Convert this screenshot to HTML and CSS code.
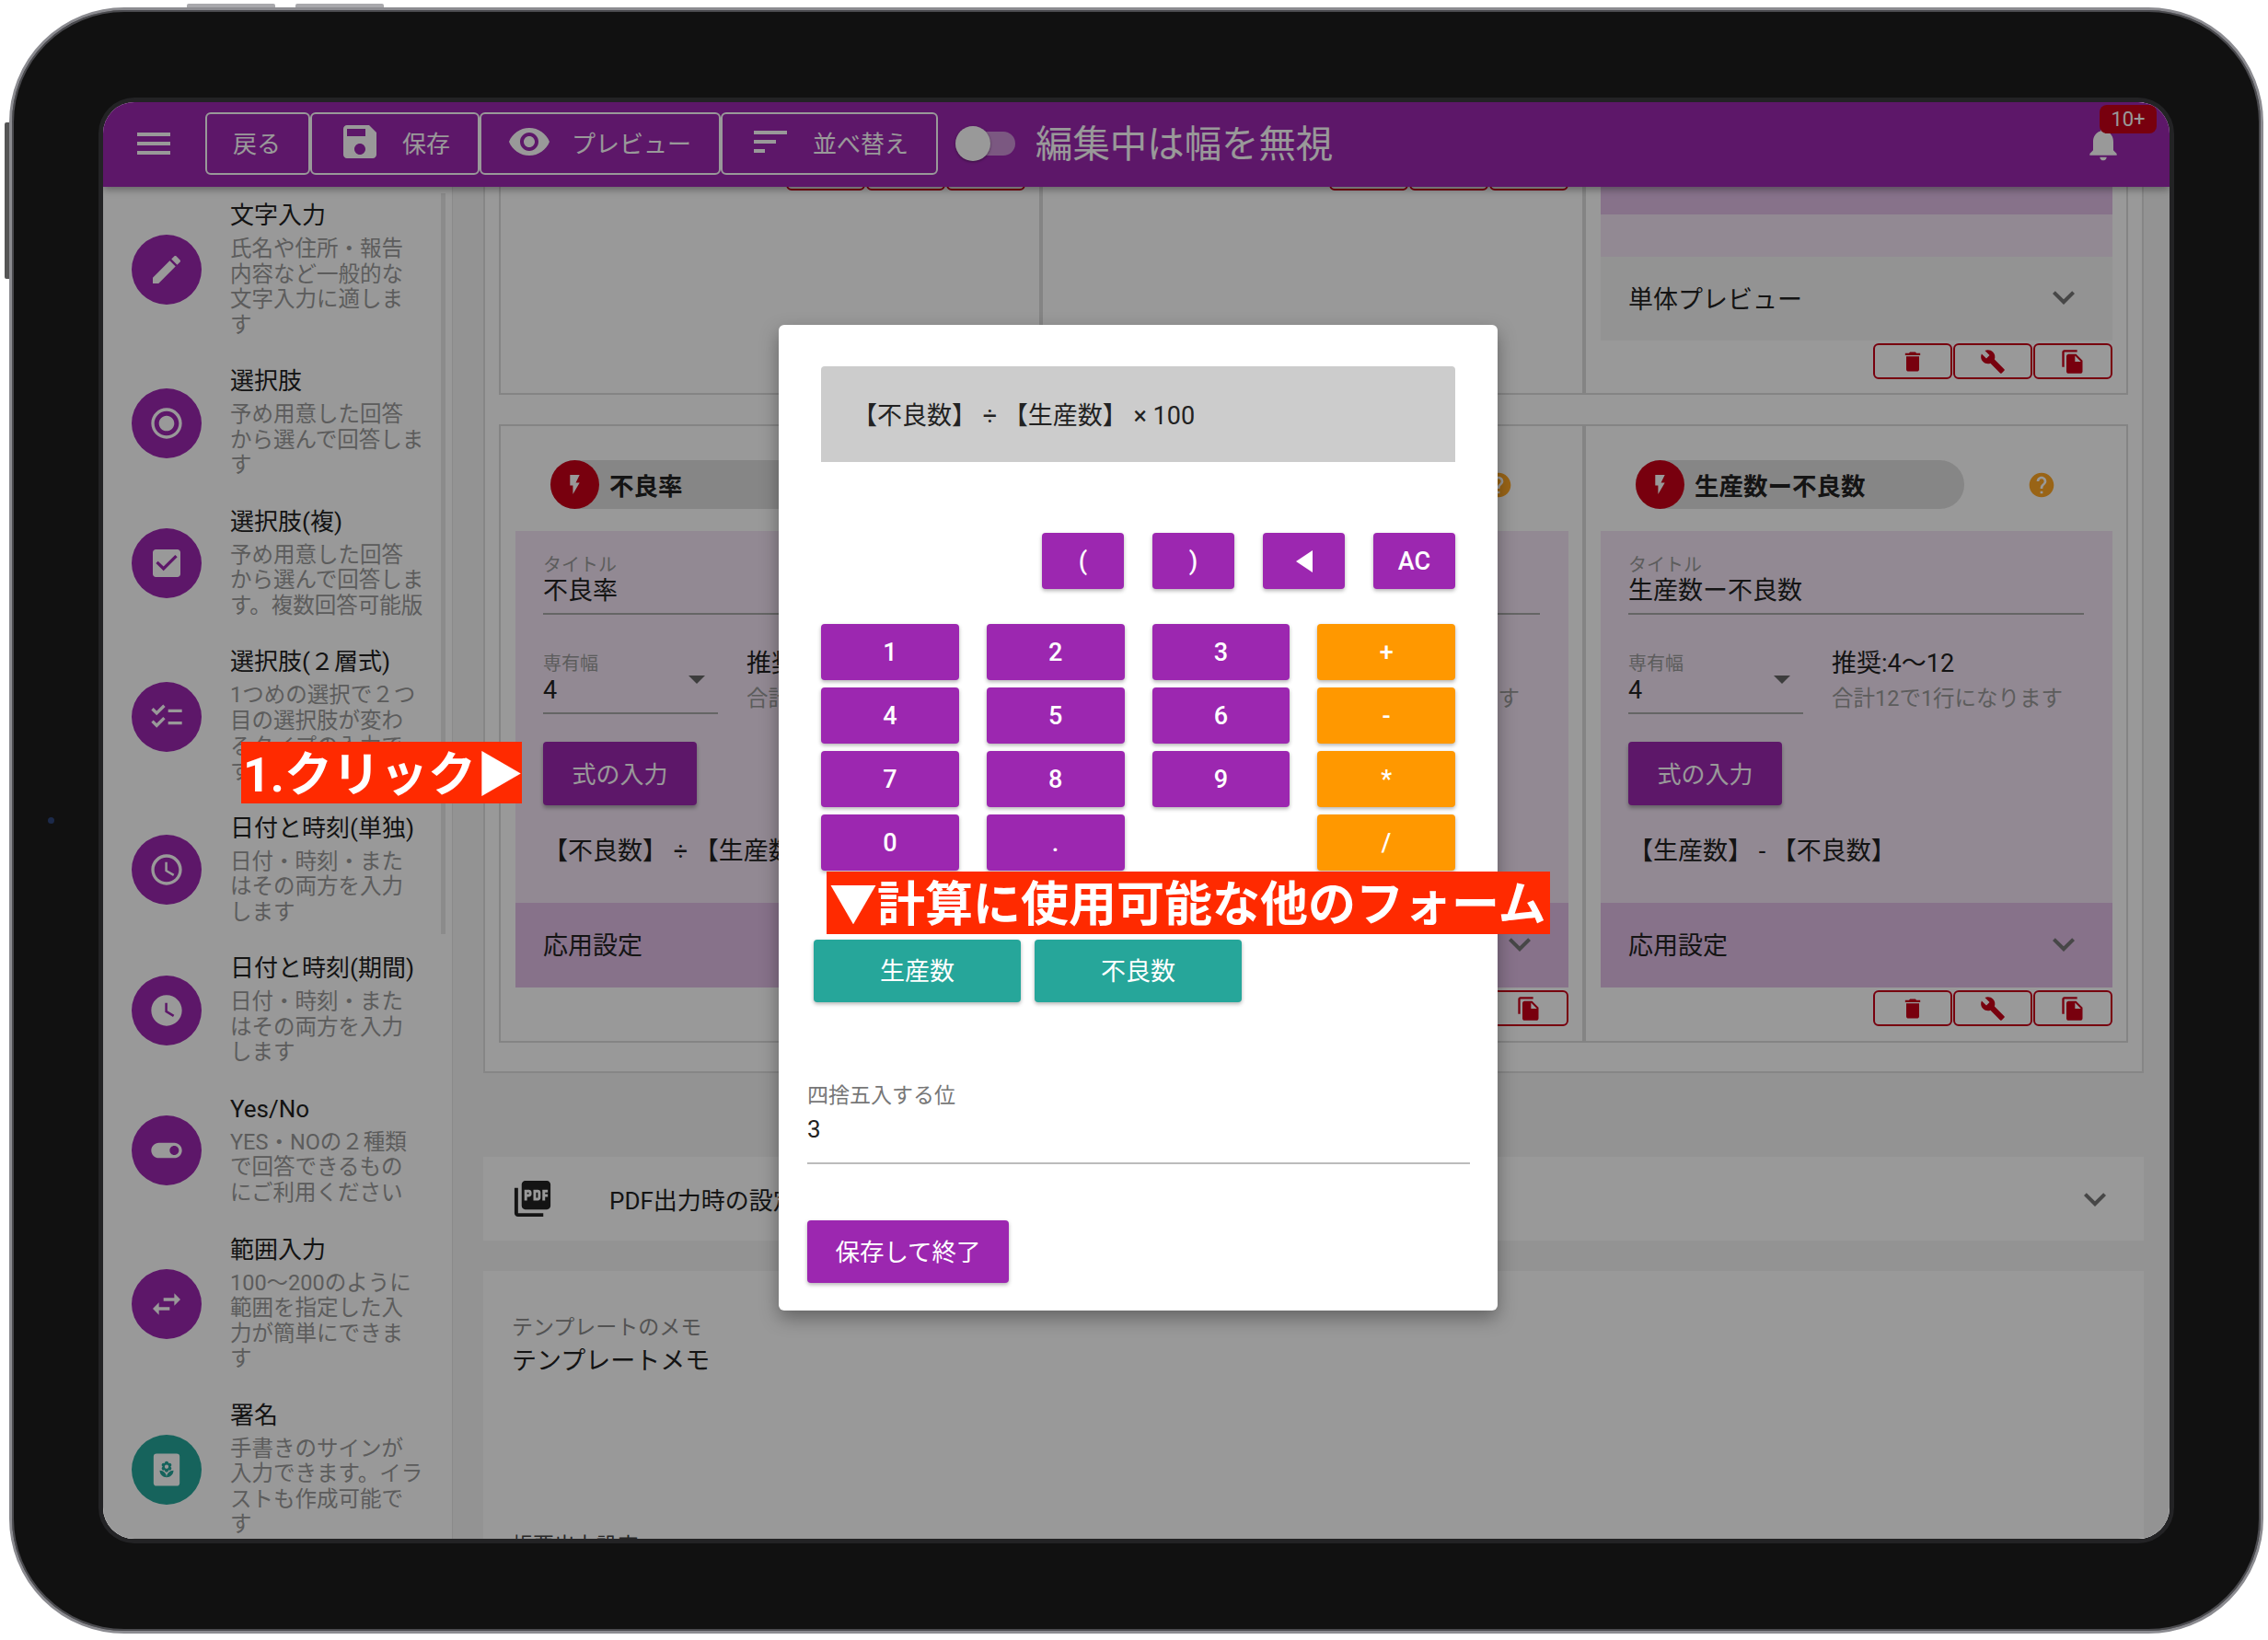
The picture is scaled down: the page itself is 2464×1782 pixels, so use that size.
FILE: index.html
```html
<!DOCTYPE html>
<html lang="ja">

<head>
  <meta charset="UTF-8">
  <title>フォーム編集</title>
  <link rel="stylesheet" href="styles.css">
</head>

<body>
  <svg class="icon-defs" aria-hidden="true">
    <symbol id="i-menu" viewBox="0 0 24 24"><path d="M3 18h18v-2H3v2zm0-5h18v-2H3v2zm0-7v2h18V6H3z"/></symbol>
    <symbol id="i-save" viewBox="0 0 24 24"><path d="M17 3H5c-1.11 0-2 .9-2 2v14c0 1.1.89 2 2 2h14c1.1 0 2-.9 2-2V7l-4-4zm-5 16c-1.66 0-3-1.34-3-3s1.34-3 3-3 3 1.34 3 3-1.34 3-3 3zm3-10H5V5h10v4z"/></symbol>
    <symbol id="i-eye" viewBox="0 0 24 24"><path d="M12 4.5C7 4.5 2.73 7.61 1 12c1.73 4.39 6 7.5 11 7.5s9.27-3.11 11-7.5c-1.73-4.39-6-7.5-11-7.5zM12 17c-2.76 0-5-2.24-5-5s2.24-5 5-5 5 2.24 5 5-2.24 5-5 5zm0-8c-1.66 0-3 1.34-3 3s1.34 3 3 3 3-1.34 3-3-1.34-3-3-3z"/></symbol>
    <symbol id="i-sort" viewBox="0 0 24 24"><path d="M3 18h6v-2H3v2zM3 6v2h18V6H3zm0 7h12v-2H3v2z"/></symbol>
    <symbol id="i-bell" viewBox="0 0 24 24"><path d="M12 22c1.1 0 2-.9 2-2h-4c0 1.1.89 2 2 2zm6-6v-5c0-3.07-1.64-5.64-4.5-6.32V4c0-.83-.67-1.5-1.5-1.5s-1.5.67-1.5 1.5v.68C7.63 5.36 6 7.92 6 11v5l-2 2v1h16v-1l-2-2z"/></symbol>
    <symbol id="i-edit" viewBox="0 0 24 24"><path d="M3 17.25V21h3.75L17.81 9.94l-3.75-3.75L3 17.25zM20.71 7.04c.39-.39.39-1.02 0-1.41l-2.34-2.34c-.39-.39-1.02-.39-1.41 0l-1.83 1.83 3.75 3.75 1.83-1.83z"/></symbol>
    <symbol id="i-radio" viewBox="0 0 24 24"><path d="M12 7c-2.76 0-5 2.24-5 5s2.24 5 5 5 5-2.24 5-5-2.24-5-5-5zm0-5C6.48 2 2 6.48 2 12s4.48 10 10 10 10-4.48 10-10S17.52 2 12 2zm0 18c-4.42 0-8-3.58-8-8s3.58-8 8-8 8 3.58 8 8-3.58 8-8 8z"/></symbol>
    <symbol id="i-check" viewBox="0 0 24 24"><path d="M19 3H5c-1.11 0-2 .9-2 2v14c0 1.1.89 2 2 2h14c1.11 0 2-.9 2-2V5c0-1.1-.89-2-2-2zm-9 14l-5-5 1.41-1.41L10 14.17l7.59-7.59L19 8l-9 9z"/></symbol>
    <symbol id="i-checklist" viewBox="0 0 24 24"><path d="M22 7h-9v2h9V7zm0 8h-9v2h9v-2zM5.54 11L2 7.46l1.41-1.41 2.12 2.12 4.24-4.24 1.41 1.41L5.54 11zm0 8L2 15.46l1.41-1.41 2.12 2.12 4.24-4.24 1.41 1.41L5.54 19z"/></symbol>
    <symbol id="i-clock" viewBox="0 0 24 24"><path d="M11.99 2C6.47 2 2 6.48 2 12s4.47 10 9.99 10C17.52 22 22 17.52 22 12S17.52 2 11.99 2zM12 20c-4.42 0-8-3.58-8-8s3.58-8 8-8 8 3.58 8 8-3.58 8-8 8zm.5-13H11v6l5.25 3.15.75-1.23-4.5-2.67z"/></symbol>
    <symbol id="i-clock-fill" viewBox="0 0 24 24"><path d="M12 2C6.5 2 2 6.5 2 12s4.5 10 10 10 10-4.5 10-10S17.5 2 12 2zm4.2 14.2L11 13V7h1.5v5.2l4.5 2.7-.8 1.3z"/></symbol>
    <symbol id="i-toggle" viewBox="0 0 24 24"><path d="M17 7H7c-2.76 0-5 2.24-5 5s2.24 5 5 5h10c2.76 0 5-2.24 5-5s-2.24-5-5-5zm0 8c-1.66 0-3-1.34-3-3s1.34-3 3-3 3 1.34 3 3-1.34 3-3 3z"/></symbol>
    <symbol id="i-swap" viewBox="0 0 24 24"><path d="M6.99 11L3 15l3.99 4v-3H14v-2H6.99v-3zM21 9l-3.99-4v3H10v2h7.01v3L21 9z"/></symbol>
    <symbol id="i-sign" viewBox="0 0 24 24">
      <rect x="3.5" y="1.5" width="17" height="21" rx="2"/>
      <path fill="#26a69a" transform="translate(6 6) scale(.5)" d="M12 22c4.97 0 9-4.03 9-9-4.97 0-9 4.03-9 9zM5.6 10.25c0 1.38 1.12 2.5 2.5 2.5.53 0 1.01-.16 1.42-.44l-.02.19c0 1.38 1.12 2.5 2.5 2.5s2.5-1.12 2.5-2.5l-.02-.19c.4.28.89.44 1.42.44 1.38 0 2.5-1.12 2.5-2.5 0-1-.59-1.85-1.43-2.25.84-.4 1.43-1.25 1.43-2.25 0-1.38-1.12-2.5-2.5-2.5-.53 0-1.01.16-1.42.44l.02-.19C14.5 2.12 13.38 1 12 1S9.5 2.12 9.5 3.5l.02.19c-.4-.28-.89-.44-1.42-.44-1.38 0-2.5 1.12-2.5 2.5 0 1 .59 1.85 1.43 2.25-.84.4-1.43 1.25-1.43 2.25zM12 5.5c1.38 0 2.5 1.12 2.5 2.5s-1.12 2.5-2.5 2.5S9.5 9.38 9.5 8s1.12-2.5 2.5-2.5zM3 13c0 4.97 4.03 9 9 9 0-4.97-4.03-9-9-9z"/>
    </symbol>
    <symbol id="i-bolt" viewBox="0 0 24 24"><path d="M7 2v11h3v9l7-12h-4l4-8z"/></symbol>
    <symbol id="i-help" viewBox="0 0 24 24"><path d="M12 2C6.48 2 2 6.48 2 12s4.48 10 10 10 10-4.48 10-10S17.52 2 12 2zm1 17h-2v-2h2v2zm2.07-7.75l-.9.92C13.45 12.9 13 13.5 13 15h-2v-.5c0-1.1.45-2.1 1.17-2.83l1.24-1.26c.37-.36.59-.86.59-1.41 0-1.1-.9-2-2-2s-2 .9-2 2H8c0-2.21 1.79-4 4-4s4 1.79 4 4c0 .88-.36 1.68-.93 2.25z"/></symbol>
    <symbol id="i-delete" viewBox="0 0 24 24"><path d="M6 19c0 1.1.9 2 2 2h8c1.1 0 2-.9 2-2V7H6v12zM19 4h-3.5l-1-1h-5l-1 1H5v2h14V4z"/></symbol>
    <symbol id="i-build" viewBox="0 0 24 24"><path d="M22.7 19l-9.1-9.1c.9-2.3.4-5-1.5-6.9-2-2-5-2.4-7.4-1.3L9 6 6 9 1.6 4.7C.4 7.1.9 10.1 2.9 12.1c1.9 1.9 4.6 2.4 6.9 1.5l9.1 9.1c.4.4 1 .4 1.4 0l2.3-2.3c.5-.4.5-1.1.1-1.4z"/></symbol>
    <symbol id="i-copy" viewBox="0 0 24 24"><path d="M16 1H4c-1.1 0-2 .9-2 2v14h2V3h12V1zm-1 4l6 6v10c0 1.1-.9 2-2 2H7.99C6.89 23 6 22.1 6 21l.01-14c0-1.1.89-2 1.99-2h7zm-1 7h5.5L14 6.5V12z"/></symbol>
    <symbol id="i-more" viewBox="0 0 24 24"><path d="M16.59 8.59L12 13.17 7.41 8.59 6 10l6 6 6-6z"/></symbol>
    <symbol id="i-pdf" viewBox="0 0 24 24"><path d="M20 2H8c-1.1 0-2 .9-2 2v12c0 1.1.9 2 2 2h12c1.1 0 2-.9 2-2V4c0-1.1-.9-2-2-2zm-8.5 7.5c0 .83-.67 1.5-1.5 1.5H9v2H7.5V7H10c.83 0 1.5.67 1.5 1.5v1zm5 2c0 .83-.67 1.5-1.5 1.5h-2.5V7H15c.83 0 1.5.67 1.5 1.5v3zm4-3H19v1h1.5V11H19v2h-1.5V7h3v1.5zM9 9.5h1v-1H9v1zM4 6H2v14c0 1.1.9 2 2 2h14v-2H4V6zm10 5.5h1v-3h-1v3z"/></symbol>
  </svg>

  <div class="tablet">
    <span class="hw-btn hw-top1"></span>
    <span class="hw-btn hw-top2"></span>
    <span class="hw-btn hw-side"></span>
    <span class="camera"></span>

    <div class="screen">
      <header class="appbar">
        <svg class="icon menu-icon"><use href="#i-menu"/></svg>
        <div class="bar-btns">
          <div class="bar-btn">戻る</div>
          <div class="bar-btn"><svg class="icon"><use href="#i-save"/></svg>保存</div>
          <div class="bar-btn"><svg class="icon"><use href="#i-eye"/></svg>プレビュー</div>
          <div class="bar-btn"><svg class="icon"><use href="#i-sort"/></svg>並べ替え</div>
        </div>
        <div class="switch"><span class="switch-thumb"></span></div>
        <div class="switch-label">編集中は幅を無視</div>
        <div class="bell">
          <svg class="icon bell-icon"><use href="#i-bell"/></svg>
          <span class="badge">10+</span>
        </div>
      </header>

      <div class="body-row">
        <aside class="sidebar">
          <span class="side-scroll"></span>
          <div class="side-item">
            <span class="side-circle"><svg class="icon"><use href="#i-edit"/></svg></span>
            <div>
              <div class="side-title">文字入力</div>
              <div class="side-desc">氏名や住所・報告<br>内容など一般的な<br>文字入力に適しま<br>す</div>
            </div>
          </div>
          <div class="side-item">
            <span class="side-circle"><svg class="icon"><use href="#i-radio"/></svg></span>
            <div>
              <div class="side-title">選択肢</div>
              <div class="side-desc">予め用意した回答<br>から選んで回答しま<br>す</div>
            </div>
          </div>
          <div class="side-item">
            <span class="side-circle"><svg class="icon"><use href="#i-check"/></svg></span>
            <div>
              <div class="side-title">選択肢(複)</div>
              <div class="side-desc">予め用意した回答<br>から選んで回答しま<br>す。複数回答可能版</div>
            </div>
          </div>
          <div class="side-item">
            <span class="side-circle"><svg class="icon"><use href="#i-checklist"/></svg></span>
            <div>
              <div class="side-title">選択肢(２層式)</div>
              <div class="side-desc">1つめの選択で２つ<br>目の選択肢が変わ<br>るタイプの入力で<br>す</div>
            </div>
          </div>
          <div class="side-item">
            <span class="side-circle"><svg class="icon"><use href="#i-clock"/></svg></span>
            <div>
              <div class="side-title">日付と時刻(単独)</div>
              <div class="side-desc">日付・時刻・また<br>はその両方を入力<br>します</div>
            </div>
          </div>
          <div class="side-item">
            <span class="side-circle"><svg class="icon"><use href="#i-clock-fill"/></svg></span>
            <div>
              <div class="side-title">日付と時刻(期間)</div>
              <div class="side-desc">日付・時刻・また<br>はその両方を入力<br>します</div>
            </div>
          </div>
          <div class="side-item">
            <span class="side-circle"><svg class="icon"><use href="#i-toggle"/></svg></span>
            <div>
              <div class="side-title">Yes/No</div>
              <div class="side-desc">YES・NOの２種類<br>で回答できるもの<br>にご利用ください</div>
            </div>
          </div>
          <div class="side-item">
            <span class="side-circle"><svg class="icon"><use href="#i-swap"/></svg></span>
            <div>
              <div class="side-title">範囲入力</div>
              <div class="side-desc">100〜200のように<br>範囲を指定した入<br>力が簡単にできま<br>す</div>
            </div>
          </div>
          <div class="side-item">
            <span class="side-circle side-circle-teal"><svg class="icon"><use href="#i-sign"/></svg></span>
            <div>
              <div class="side-title">署名</div>
              <div class="side-desc">手書きのサインが<br>入力できます。イラ<br>ストも作成可能で<br>す</div>
            </div>
          </div>
        </aside>

        <main class="content">
          <section class="form-panel">
            <div class="card-row">
              <div class="card card-top">
                <div class="tools">
                  <span class="tool"><svg class="icon"><use href="#i-delete"/></svg></span>
                  <span class="tool"><svg class="icon"><use href="#i-build"/></svg></span>
                  <span class="tool"><svg class="icon"><use href="#i-copy"/></svg></span>
                </div>
              </div>
              <div class="card card-top">
                <div class="tools">
                  <span class="tool"><svg class="icon"><use href="#i-delete"/></svg></span>
                  <span class="tool"><svg class="icon"><use href="#i-build"/></svg></span>
                  <span class="tool"><svg class="icon"><use href="#i-copy"/></svg></span>
                </div>
              </div>
              <div class="card card-top card-top-last">
                <div class="strip-dark"></div>
                <div class="strip-light"></div>
                <div class="preview-row">単体プレビュー<svg class="icon chevron"><use href="#i-more"/></svg></div>
                <div class="tools">
                  <span class="tool"><svg class="icon"><use href="#i-delete"/></svg></span>
                  <span class="tool"><svg class="icon"><use href="#i-build"/></svg></span>
                  <span class="tool"><svg class="icon"><use href="#i-copy"/></svg></span>
                </div>
              </div>
            </div>

            <div class="card-row card-row-main">
              <div class="card">
                <div class="chip-row">
                  <div class="chip"><span class="chip-dot"><svg class="icon"><use href="#i-bolt"/></svg></span>不良率</div>
                  <svg class="icon help"><use href="#i-help"/></svg>
                </div>
                <div class="card-body">
                  <div class="field">
                    <div class="field-label">タイトル</div>
                    <div class="field-value">不良率</div>
                  </div>
                  <div class="width-row">
                    <div class="select">
                      <div class="field-label">専有幅</div>
                      <div class="select-value">4<span class="select-arrow"></span></div>
                    </div>
                    <div>
                      <div class="hint-main">推奨:4〜12</div>
                      <div class="hint-sub">合計12で1行になります</div>
                    </div>
                  </div>
                  <div class="formula-btn">式の入力</div>
                  <div class="formula">【不良数】 ÷ 【生産数】 × 100</div>
                </div>
                <div class="advanced">応用設定<svg class="icon chevron"><use href="#i-more"/></svg></div>
                <div class="tools">
                  <span class="tool"><svg class="icon"><use href="#i-delete"/></svg></span>
                  <span class="tool"><svg class="icon"><use href="#i-build"/></svg></span>
                  <span class="tool"><svg class="icon"><use href="#i-copy"/></svg></span>
                </div>
              </div>

              <div class="card">
                <div class="chip-row">
                  <div class="chip"><span class="chip-dot"><svg class="icon"><use href="#i-bolt"/></svg></span>良品率</div>
                  <svg class="icon help"><use href="#i-help"/></svg>
                </div>
                <div class="card-body">
                  <div class="field">
                    <div class="field-label">タイトル</div>
                    <div class="field-value">良品率</div>
                  </div>
                  <div class="width-row">
                    <div class="select">
                      <div class="field-label">専有幅</div>
                      <div class="select-value">4<span class="select-arrow"></span></div>
                    </div>
                    <div>
                      <div class="hint-main">推奨:4〜12</div>
                      <div class="hint-sub">合計12で1行になります</div>
                    </div>
                  </div>
                  <div class="formula-btn">式の入力</div>
                  <div class="formula">【不良数】 ÷ 【生産数】</div>
                </div>
                <div class="advanced">応用設定<svg class="icon chevron"><use href="#i-more"/></svg></div>
                <div class="tools">
                  <span class="tool"><svg class="icon"><use href="#i-delete"/></svg></span>
                  <span class="tool"><svg class="icon"><use href="#i-build"/></svg></span>
                  <span class="tool"><svg class="icon"><use href="#i-copy"/></svg></span>
                </div>
              </div>

              <div class="card">
                <div class="chip-row">
                  <div class="chip"><span class="chip-dot"><svg class="icon"><use href="#i-bolt"/></svg></span>生産数ー不良数</div>
                  <svg class="icon help"><use href="#i-help"/></svg>
                </div>
                <div class="card-body">
                  <div class="field">
                    <div class="field-label">タイトル</div>
                    <div class="field-value">生産数ー不良数</div>
                  </div>
                  <div class="width-row">
                    <div class="select">
                      <div class="field-label">専有幅</div>
                      <div class="select-value">4<span class="select-arrow"></span></div>
                    </div>
                    <div>
                      <div class="hint-main">推奨:4〜12</div>
                      <div class="hint-sub">合計12で1行になります</div>
                    </div>
                  </div>
                  <div class="formula-btn">式の入力</div>
                  <div class="formula">【生産数】 - 【不良数】</div>
                </div>
                <div class="advanced">応用設定<svg class="icon chevron"><use href="#i-more"/></svg></div>
                <div class="tools">
                  <span class="tool"><svg class="icon"><use href="#i-delete"/></svg></span>
                  <span class="tool"><svg class="icon"><use href="#i-build"/></svg></span>
                  <span class="tool"><svg class="icon"><use href="#i-copy"/></svg></span>
                </div>
              </div>
            </div>
          </section>

          <section class="pdf-panel">
            <svg class="icon pdf-icon"><use href="#i-pdf"/></svg>
            <span class="pdf-text">PDF出力時の設定</span>
            <svg class="icon chevron"><use href="#i-more"/></svg>
          </section>

          <section class="memo-panel">
            <div class="memo-label">テンプレートのメモ</div>
            <div class="memo-value">テンプレートメモ</div>
            <div class="memo-next">帳票出力設定</div>
          </section>
        </main>
      </div>

      <div class="scrim"></div>

      <div class="dialog">
        <div class="calc">
          <div class="calc-display">【不良数】 ÷ 【生産数】 × 100</div>
          <div class="calc-fn">
            <span class="key">(</span>
            <span class="key">)</span>
            <span class="key"><span class="key-back"></span></span>
            <span class="key">AC</span>
          </div>
          <div class="calc-pad">
            <span class="key">1</span><span class="key">2</span><span class="key">3</span><span class="key key-op">+</span>
            <span class="key">4</span><span class="key">5</span><span class="key">6</span><span class="key key-op">-</span>
            <span class="key">7</span><span class="key">8</span><span class="key">9</span><span class="key key-op">*</span>
            <span class="key">0</span><span class="key">.</span><span></span><span class="key key-op">/</span>
          </div>
        </div>
        <div class="calc-forms">
          <span class="key key-form">生産数</span>
          <span class="key key-form">不良数</span>
        </div>
        <div class="round-field">
          <div class="round-label">四捨五入する位</div>
          <div class="round-value">3</div>
        </div>
        <div class="key save-btn">保存して終了</div>
      </div>

      <div class="note note-click">1.クリック▶</div>
      <div class="note note-forms">▼計算に使用可能な他のフォーム</div>
    </div>
  </div>
</body>

</html>
```

FILE: styles.css
```css
* {
  box-sizing: border-box;
}

html,
body {
  height: 100%;
}

body {
  margin: 0;
  padding: 8px 5px 7px 10px;
  display: flex;
  overflow: hidden;
  background-color: #fff;
  font-family: Roboto, "Noto Sans CJK JP", sans-serif;
  font-size: 26px;
  color: #222;
}

.icon-defs {
  display: none;
}

.icon {
  width: 48px;
  height: 48px;
  flex: none;
  fill: currentColor;
}

/* tablet frame */
.tablet {
  flex: 1;
  position: relative;
  display: flex;
  padding: 100px 99px;
  background-color: #111;
  border: 3px solid #8b8b90;
  border-radius: 125px;
  box-shadow: inset 0 0 0 2px #4a4a4e;
}

.hw-btn {
  position: absolute;
  background-color: #a8a8ac;
}

.hw-top1,
.hw-top2 {
  top: -7px;
  width: 96px;
  height: 4px;
  border-radius: 2px 2px 0 0;
}

.hw-top1 {
  left: 190px;
}

.hw-top2 {
  left: 308px;
}

.hw-side {
  left: -8px;
  top: 122px;
  width: 5px;
  height: 170px;
  background-color: #555;
  border-radius: 2px 0 0 2px;
}

.camera {
  position: absolute;
  left: 39px;
  top: 877px;
  width: 7px;
  height: 7px;
  border-radius: 50%;
  background-color: #1c2a4a;
}

.screen {
  flex: 1;
  position: relative;
  display: flex;
  flex-direction: column;
  overflow: hidden;
  background-color: #fff;
  border-radius: 34px;
  box-shadow: 0 0 0 5px #232325;
}

/* app bar */
.appbar {
  position: relative;
  z-index: 2;
  height: 92px;
  flex: none;
  display: flex;
  align-items: center;
  padding: 0 0 3px 31px;
  background-color: #9c27b0;
  color: #fff;
  box-shadow: 0 3px 8px rgba(0, 0, 0, .35);
}

.bar-btns {
  display: flex;
  margin-left: 32px;
}

.bar-btn {
  height: 68px;
  display: flex;
  align-items: center;
  gap: 22px;
  padding: 0 30px 3px 28px;
  border: 2px solid #fff;
  border-radius: 6px;
}

.switch {
  position: relative;
  width: 65px;
  height: 26px;
  margin-left: 19px;
  background-color: #ce93d8;
  border-radius: 13px;
}

.switch-thumb {
  position: absolute;
  left: 0;
  top: -6px;
  width: 38px;
  height: 38px;
  border-radius: 50%;
  background-color: #fff;
  box-shadow: 0 1px 3px rgba(0, 0, 0, .4);
}

.switch-label {
  margin-left: 22px;
  padding-bottom: 4px;
  font-size: 40.4px;
}

.bell {
  position: relative;
  margin-left: auto;
  margin-right: 50px;
  display: flex;
}

.bell-icon {
  width: 44px;
  height: 44px;
}

.badge {
  position: absolute;
  left: 18px;
  top: -20px;
  width: 62px;
  height: 31px;
  display: flex;
  align-items: center;
  justify-content: center;
  background-color: #c80018;
  border-radius: 8px;
  font-size: 22px;
}

/* left list */
.body-row {
  flex: 1;
  min-height: 0;
  display: flex;
}

.sidebar {
  position: relative;
  width: 380px;
  flex: none;
  background-color: #fff;
  border-right: 1px solid #e6e6e6;
}

.side-scroll {
  position: absolute;
  left: 367px;
  top: 7px;
  width: 5px;
  height: 805px;
  background-color: #e8e8e8;
}

.side-item {
  display: flex;
  align-items: center;
  gap: 31px;
  padding: 16px 0 16px 31px;
}

.side-circle {
  width: 76px;
  height: 76px;
  flex: none;
  display: flex;
  align-items: center;
  justify-content: center;
  border-radius: 50%;
  background-color: #9c27b0;
  color: #fff;
}

.side-circle .icon {
  width: 40px;
  height: 40px;
}

.side-circle-teal {
  background-color: #26a69a;
}

.side-title {
  line-height: 30px;
  white-space: nowrap;
}

.side-desc {
  margin-top: 8px;
  font-size: 23.5px;
  line-height: 27.55px;
  color: #9a9a9a;
  white-space: nowrap;
}

/* main column */
.content {
  flex: 1;
  min-width: 0;
  background-color: #f5f5f5;
  padding-left: 33px;
  padding-right: 28px;
}

.form-panel {
  margin-top: -103px;
  padding: 17px 15px 31px;
  background-color: #fff;
  border: 2px solid #e0e0e0;
}

.card-row {
  display: grid;
  grid-template-columns: 589px 590px 591px;
}

.card-row-main {
  margin-top: 32px;
}

.card {
  display: flex;
  flex-direction: column;
  padding: 0 15px 16px 16px;
  border: 2px solid #ddd;
  min-width: 0;
  font-size: 27px;
}

.card-top {
  height: 310px;
  padding-top: 44px;
  padding-bottom: 0;
}

.card-top-last {
  justify-content: flex-end;
  padding-bottom: 15px;
}

.strip-dark {
  height: 30px;
  background-color: #e1bee7;
}

.strip-light {
  height: 46px;
  background-color: #f3e5f5;
}

.preview-row,
.advanced {
  height: 91px;
  flex: none;
  display: flex;
  align-items: center;
  justify-content: space-between;
  padding: 0 29px 3px 30px;
}

.preview-row {
  background-color: #f5f5f5;
}

.advanced {
  height: 92px;
  background-color: #e1bee7;
}

.chevron {
  color: #777;
}

.tools {
  display: flex;
  justify-content: flex-end;
  gap: 1px;
  margin-top: 3px;
}

.tool {
  width: 86px;
  height: 39px;
  display: flex;
  align-items: center;
  justify-content: center;
  border: 2px solid #c80018;
  border-radius: 6px;
  color: #c80018;
}

.tool .icon {
  width: 28px;
  height: 28px;
}

.chip-row {
  display: flex;
  align-items: center;
  margin: 37px 0 0 38px;
}

.chip {
  width: 357px;
  height: 53px;
  flex: none;
  display: flex;
  align-items: center;
  gap: 11px;
  background-color: #e0e0e0;
  border-radius: 27px;
  font-size: 26.5px;
  font-weight: 700;
  white-space: nowrap;
}

.chip-dot {
  width: 53px;
  height: 53px;
  flex: none;
  display: flex;
  align-items: center;
  justify-content: center;
  border-radius: 50%;
  background-color: #c80018;
  color: #fff;
}

.chip-dot .icon {
  width: 25px;
  height: 25px;
}

.help {
  width: 32px;
  height: 32px;
  margin-left: 68px;
  color: #ffa726;
}

.card-body {
  margin-top: 24px;
  padding: 25px 31px 38px 30px;
  background-color: #f3e5f5;
  overflow: hidden;
}

.field {
  padding-bottom: 8px;
  border-bottom: 2px solid #a9a9a9;
}

.field-label {
  font-size: 20px;
  line-height: 24px;
  color: #9a9a9a;
}

.field-value {
  line-height: 32px;
  white-space: nowrap;
}

.width-row {
  display: flex;
  gap: 31px;
  margin-top: 41px;
}

.select {
  width: 190px;
  flex: none;
  padding-bottom: 8px;
  border-bottom: 2px solid #a9a9a9;
}

.select-value {
  display: flex;
  justify-content: space-between;
  line-height: 32px;
  padding: 1px 14px 0 0;
}

.select-arrow {
  width: 0;
  height: 0;
  border-left: 9px solid transparent;
  border-right: 9px solid transparent;
  border-top: 9px solid #666;
}

.hint-main {
  line-height: 24px;
  white-space: nowrap;
}

.hint-sub {
  margin-top: 13px;
  font-size: 23.5px;
  line-height: 26px;
  color: #9a9a9a;
  white-space: nowrap;
}

.formula-btn {
  width: 167px;
  height: 69px;
  margin-top: 30px;
  padding-bottom: 2px;
  display: flex;
  align-items: center;
  justify-content: center;
  background-color: #9c27b0;
  border-radius: 4px;
  color: #fff;
  font-size: 26px;
  box-shadow: 0 3px 4px rgba(0, 0, 0, .3);
}

.formula {
  margin-top: 32px;
  line-height: 36px;
  white-space: nowrap;
}

.pdf-panel {
  height: 91px;
  margin-top: 91px;
  display: flex;
  align-items: center;
  padding: 0 29px 0 30px;
  background-color: #fff;
}

.pdf-icon {
  width: 47px;
  height: 47px;
  color: #222;
}

.pdf-text {
  flex: 1;
  margin-left: 60px;
}

.memo-panel {
  height: 400px;
  margin-top: 33px;
  padding: 47px 0 0 31px;
  background-color: #fff;
}

.memo-label {
  font-size: 23px;
  line-height: 30px;
  color: #8a8a8a;
}

.memo-value {
  margin-top: 3px;
  font-size: 27px;
  line-height: 36px;
}

.memo-next {
  margin-top: 168px;
  font-size: 23px;
  line-height: 30px;
  color: #444;
}

/* dark layer and dialog */
.scrim {
  position: absolute;
  z-index: 3;
  inset: 0;
  background-color: rgba(0, 0, 0, .4);
}

.dialog {
  position: absolute;
  z-index: 4;
  left: 734px;
  top: 242px;
  width: 781px;
  height: 1071px;
  background-color: #fff;
  border-radius: 6px;
  box-shadow: 0 8px 20px rgba(0, 0, 0, .35);
}

.calc {
  margin: 45px 46px 0;
}

.calc-display {
  height: 104px;
  display: flex;
  align-items: center;
  padding: 0 0 2px 34px;
  background-color: #ccc;
  border-radius: 4px 4px 0 0;
  font-size: 27px;
  white-space: pre;
}

.calc-fn {
  display: flex;
  justify-content: flex-end;
  gap: 31px;
  margin-top: 77px;
}

.calc-fn .key {
  width: 89px;
}

.calc-pad {
  display: grid;
  grid-template-columns: repeat(4, 1fr);
  column-gap: 30px;
  row-gap: 8px;
  margin-top: 38px;
}

.key {
  height: 61px;
  display: flex;
  align-items: center;
  justify-content: center;
  background-color: #9c27b0;
  border-radius: 4px;
  color: #fff;
  font-size: 27px;
  font-weight: 500;
  box-shadow: 0 2px 4px rgba(0, 0, 0, .3);
}

.key-op {
  background-color: #ff9800;
}

.key-back {
  width: 0;
  height: 0;
  border-top: 12px solid transparent;
  border-bottom: 12px solid transparent;
  border-right: 18px solid #fff;
}

.calc-forms {
  display: flex;
  gap: 15px;
  margin: 75px 0 0 38px;
}

.key-form {
  width: 225px;
  height: 68px;
  padding-bottom: 4px;
  background-color: #26a69a;
  font-weight: 400;
}

.round-field {
  width: 720px;
  margin: 87px 0 0 31px;
  padding-bottom: 19px;
  border-bottom: 2px solid #bbb;
}

.round-label {
  font-size: 23px;
  line-height: 30px;
  color: #777;
}

.round-value {
  margin-top: 4px;
  line-height: 34px;
}

.save-btn {
  width: 219px;
  height: 68px;
  margin: 61px 0 0 31px;
  padding-bottom: 4px;
  font-size: 26.5px;
  font-weight: 400;
}

/* red notes pasted on the screenshot */
.note {
  position: absolute;
  z-index: 5;
  display: flex;
  align-items: center;
  padding-bottom: 5px;
  background-color: #ff2a00;
  color: #fff;
  font-size: 52px;
  font-weight: 700;
  white-space: nowrap;
}

.note-click {
  left: 150px;
  top: 695px;
  width: 305px;
  height: 67px;
  padding-left: 2px;
}

.note-forms {
  left: 786px;
  top: 836px;
  width: 786px;
  height: 68px;
  padding-left: 3px;
}
```
